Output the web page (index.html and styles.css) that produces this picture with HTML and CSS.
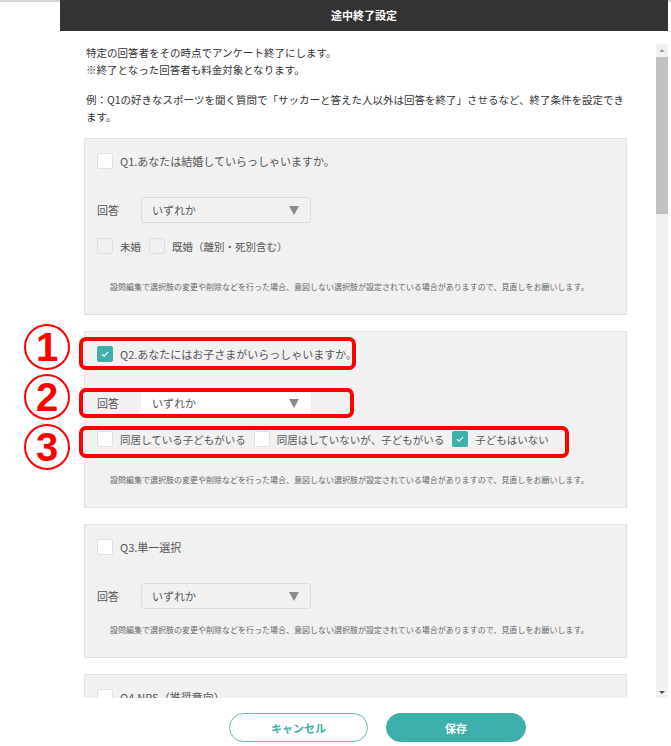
FILE: index.html
```html
<!DOCTYPE html>
<html lang="ja">
<head>
    <meta charset="UTF-8">
    <meta name="viewport" content="width=device-width, initial-scale=1.0">
    <title>途中終了設定</title>
    <link rel="stylesheet" href="styles.css">
</head>
<body>
    <div class="modal">
        <div class="modal-header">途中終了設定</div>
        <div class="modal-body">
            <div class="scroll-area">
                <p class="lead">特定の回答者をその時点でアンケート終了にします。<br>※終了となった回答者も料金対象となります。</p>
                <p class="lead">例：Q1の好きなスポーツを聞く質問で「サッカーと答えた人以外は回答を終了」させるなど、終了条件を設定できます。</p>

                <div class="question">
                    <div class="q-title"><span class="check"></span>Q1.あなたは結婚していらっしゃいますか。</div>
                    <div class="answer">
                        <span class="answer-label">回答</span>
                        <div class="select">いずれか<span class="arrow"></span></div>
                    </div>
                    <div class="options">
                        <span class="option"><span class="check off"></span>未婚</span>
                        <span class="option"><span class="check off"></span>既婚（離別・死別含む）</span>
                    </div>
                    <p class="note">設問編集で選択肢の変更や削除などを行った場合、意図しない選択肢が設定されている場合がありますので、見直しをお願いします。</p>
                </div>

                <div class="question">
                    <div class="q-title"><span class="check on"><svg viewBox="0 0 16 16"><polyline points="4.5,8.3 7,10.6 11.5,5.6"/></svg></span>Q2.あなたにはお子さまがいらっしゃいますか。</div>
                    <div class="answer">
                        <span class="answer-label">回答</span>
                        <div class="select active">いずれか<span class="arrow"></span></div>
                    </div>
                    <div class="options">
                        <span class="option"><span class="check"></span>同居している子どもがいる</span>
                        <span class="option"><span class="check"></span>同居はしていないが、子どもがいる</span>
                        <span class="option"><span class="check on"><svg viewBox="0 0 16 16"><polyline points="4.5,8.3 7,10.6 11.5,5.6"/></svg></span>子どもはいない</span>
                    </div>
                    <p class="note">設問編集で選択肢の変更や削除などを行った場合、意図しない選択肢が設定されている場合がありますので、見直しをお願いします。</p>
                </div>

                <div class="question">
                    <div class="q-title"><span class="check"></span>Q3.単一選択</div>
                    <div class="answer">
                        <span class="answer-label">回答</span>
                        <div class="select">いずれか<span class="arrow"></span></div>
                    </div>
                    <p class="note">設問編集で選択肢の変更や削除などを行った場合、意図しない選択肢が設定されている場合がありますので、見直しをお願いします。</p>
                </div>

                <div class="question">
                    <div class="q-title"><span class="check"></span>Q4.NPS（推奨意向）</div>
                </div>
            </div>
            <div class="scrollbar">
                <span class="sb-btn up"></span>
                <div class="sb-track"><div class="sb-thumb"></div></div>
                <span class="sb-btn down"></span>
            </div>
        </div>
        <div class="modal-footer">
            <button class="btn btn-cancel">キャンセル</button>
            <button class="btn btn-save">保存</button>
        </div>
    </div>

    <!-- 説明用の赤枠 -->
    <div class="mark mark-1"><span class="num">1</span></div>
    <div class="mark mark-2"><span class="num">2</span></div>
    <div class="mark mark-3"><span class="num">3</span></div>
    <div class="frame frame-1"></div>
    <div class="frame frame-2"></div>
    <div class="frame frame-3"></div>
</body>
</html>
```

FILE: styles.css
```css
body {
    margin: 0;
    width: 671px;
    height: 746px;
    overflow: hidden;
    background: #fff;
    box-shadow: inset 0 2px #d4d4d4;
    font-family: "Noto Sans CJK JP", "Noto Sans", sans-serif;
    color: #333;
    position: relative;
}
.modal {
    margin-left: 60px;
    width: 608px;
    height: 746px;
    display: flex;
    flex-direction: column;
    background: #fff;
}
.modal-header {
    height: 31px;
    line-height: 31px;
    background: #333;
    color: #fff;
    font-size: 11px;
    font-weight: bold;
    text-align: center;
}
.modal-body {
    display: flex;
    margin-top: 13px;
    height: 654px;
}
.scroll-area {
    flex: 1;
    overflow: hidden;
    padding: 0 29px 0 24px;
}
.lead {
    margin: 0 0 13px 2px;
    font-size: 10.5px;
    line-height: 17px;
    color: #333;
}
.question {
    background: #f1f1f1;
    border: 1px solid #e2e2e2;
    padding: 14px 12px 21px;
    margin-bottom: 16px;
}
.lead + .question {
    margin-top: 13px;
}
.q-title {
    display: flex;
    align-items: center;
    height: 16px;
    font-size: 11px;
    color: #555;
}
.check {
    box-sizing: border-box;
    width: 16px;
    height: 16px;
    border: 1px solid #e0e0e0;
    border-radius: 2px;
    background: #fff;
    margin-right: 7px;
    flex-shrink: 0;
    display: inline-flex;
}
.check.off {
    background: #f1f1f1;
    border-color: #dedede;
}
.check.on {
    background: #3eafab;
    border-color: #3eafab;
}
.check svg {
    width: 14px;
    height: 14px;
    fill: none;
    stroke: #fff;
    stroke-width: 1.3;
}
.answer {
    display: flex;
    align-items: center;
    margin-top: 28px;
    height: 26px;
}
.answer-label {
    width: 44px;
    font-size: 11px;
    color: #555;
}
.select {
    box-sizing: border-box;
    width: 170px;
    height: 26px;
    padding: 0 11px 0 10px;
    border: 1px solid #dcdcdc;
    border-radius: 3px;
    background: #f1f1f1;
    display: flex;
    align-items: center;
    justify-content: space-between;
    font-size: 11px;
    color: #555;
}
.select.active {
    background: #fff;
    border-color: #fff;
    border-radius: 0;
}
.arrow {
    width: 0;
    height: 0;
    border-left: 5.5px solid transparent;
    border-right: 5.5px solid transparent;
    border-top: 9px solid #8a8a8a;
}
.options {
    display: flex;
    gap: 8px;
    margin-top: 15px;
    height: 16px;
}
.option {
    display: flex;
    align-items: center;
    font-size: 10.5px;
    color: #555;
}
.note {
    margin: 15px 0 0 13px;
    font-size: 8px;
    line-height: 12px;
    color: #666;
    white-space: nowrap;
}
.options + .note {
    margin-top: 27px;
}
.scrollbar {
    width: 12px;
    display: flex;
    flex-direction: column;
    background: #f1f1f1;
}
.sb-btn {
    height: 12px;
    display: flex;
    justify-content: center;
    align-items: center;
}
.sb-btn::after {
    content: "";
    border-left: 3px solid transparent;
    border-right: 3px solid transparent;
}
.sb-btn.up::after {
    border-bottom: 3px solid #a3a3a3;
}
.sb-btn.down::after {
    border-top: 3px solid #505050;
}
.sb-track {
    flex: 1;
}
.sb-thumb {
    margin: 1px 0 0;
    height: 157px;
    background: #c1c1c1;
}
.modal-footer {
    display: flex;
    justify-content: center;
    gap: 18px;
    padding: 15px 0 0 27px;
}
.btn {
    width: 140px;
    height: 29px;
    border-radius: 15px;
    font-family: inherit;
    font-size: 11px;
    font-weight: bold;
    cursor: pointer;
}
.btn-cancel {
    background: #fff;
    border: 1px solid #5cbdb9;
    color: #3eafab;
    width: 139px;
}
.btn-save {
    background: #3eafab;
    border: 1px solid #3eafab;
    color: #fff;
}
.mark {
    position: absolute;
    left: 24px;
    box-sizing: border-box;
    width: 46px;
    height: 46px;
    border: 2px solid #f00;
    border-radius: 50%;
    display: flex;
    justify-content: center;
    align-items: center;
}
.mark-1 { top: 324px; }
.mark-2 { top: 374px; }
.mark-3 { top: 424px; }
.num {
    font-family: "Liberation Sans", sans-serif;
    font-weight: bold;
    font-size: 40px;
    line-height: 1;
    color: #f00;
}
.frame {
    position: absolute;
    box-sizing: border-box;
    border: 4px solid #f00;
    border-radius: 7px;
}
.frame-1 { left: 79px; top: 337px; width: 277px; height: 33px; }
.frame-2 { left: 79px; top: 388px; width: 275px; height: 30px; }
.frame-3 { left: 79px; top: 426px; width: 490px; height: 32px; }
```
